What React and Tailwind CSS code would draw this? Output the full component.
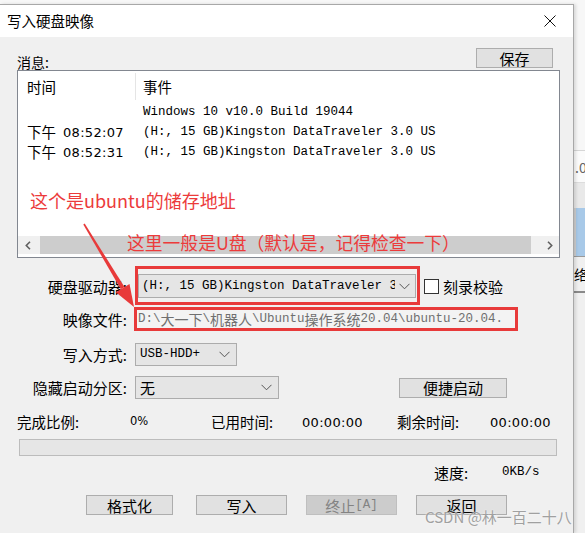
import React from "react";

const CJK = "font-['Noto_Sans_CJK_SC','Noto_Sans_CJK_JP',sans-serif]";
const MONO = "font-['Liberation_Mono','Noto_Sans_CJK_SC',monospace]";
const DIG = "font-['DejaVu_Sans','Noto_Sans_CJK_SC',sans-serif]";

function Chevron() {
  return (
    <svg width="11" height="7" viewBox="0 0 11 7" className="shrink-0">
      <path d="M0.5 0.8 L5.5 5.8 L10.5 0.8" fill="none" stroke="#555" strokeWidth="1" />
    </svg>
  );
}

function Btn({ children, className = "", disabled = false }) {
  return (
    <div
      className={
        "h-[20px] flex items-center justify-center border text-[15px] leading-none " +
        (disabled
          ? "bg-[#cccccc] border-[#bfbfbf] text-[#838383] "
          : "bg-[#e1e1e1] border-[#adadad] text-black ") +
        className
      }
    >
      {children}
    </div>
  );
}

function Label({ children }) {
  return (
    <div className="w-[110px] shrink-0 text-right text-[15px] leading-none text-black whitespace-nowrap">
      {children}
    </div>
  );
}

export default function App() {
  return (
    <div className={"relative w-[585px] h-[533px] overflow-hidden bg-[#f7f7f7] flex " + CJK}>
      {/* dialog */}
      <div className="w-[574px] h-[529px] mt-[4px] flex flex-col border-t border-r border-[#a8a8a8] shadow-[2px_0_3px_rgba(0,0,0,0.12)] z-10 shrink-0">
        {/* title bar */}
        <div className="h-[32px] bg-white flex items-center justify-between pl-[7px] pr-[17px] shrink-0">
          <span className="text-[14.5px] leading-none text-black">写入硬盘映像</span>
          <svg width="12" height="12" viewBox="0 0 12 12">
            <path d="M0.5 0.5 L11.5 11.5 M11.5 0.5 L0.5 11.5" stroke="#111" strokeWidth="1" />
          </svg>
        </div>

        {/* body */}
        <div className="flex-1 bg-[#f0f0f0] pl-[17px] pr-[13px] flex flex-col">
          <div className="mt-[9px] h-[24px] flex justify-between">
            <div className="self-end text-[14px] leading-[16px] text-black">消息:</div>
            <Btn className="w-[77px] mt-[2px] mr-[7px]">保存</Btn>
          </div>

          {/* list */}
          <div className="h-[188px] bg-white border border-[#828790] flex flex-col">
            <div className="h-[31px] flex items-stretch shrink-0">
              <div className="w-[117px] pl-[9px] flex items-center text-[14.5px] text-black">时间</div>
              <div className="flex items-center pl-[7px] border-l border-[#e5e5e5] my-[2px] text-[14.5px] text-black">事件</div>
            </div>
            {[
              ["", "Windows 10 v10.0 Build 19044"],
              ["08:52:07", "(H:, 15 GB)Kingston DataTraveler 3.0 US"],
              ["08:52:31", "(H:, 15 GB)Kingston DataTraveler 3.0 US"],
            ].map(([t, e], i) => (
              <div key={i} className="h-[20px] flex items-center shrink-0">
                <div className="w-[125px] pl-[9px] flex items-center whitespace-nowrap">
                  {t && (
                    <>
                      <span className="text-[14.5px] leading-none text-black">下午</span>
                      <span className={"ml-[7px] text-[13px] tracking-[0.3px] leading-none text-black " + DIG}>{t}</span>
                    </>
                  )}
                </div>
                <div className={"text-[12.5px] leading-none text-black whitespace-nowrap " + MONO}>{e}</div>
              </div>
            ))}
            <div className="flex-1" />
            <div className="h-[18px] mb-[3px] flex items-stretch bg-[#f0f0f0] shrink-0">
              <div className="w-[20px] flex items-center justify-center">
                <svg width="6" height="9" viewBox="0 0 6 9">
                  <path d="M5 0.8 L1.3 4.5 L5 8.2" fill="none" stroke="#606060" strokeWidth="1.6" />
                </svg>
              </div>
              <div className="flex-1 flex items-stretch">
                <div className="ml-[2px] mr-[9px] flex-1 bg-[#cdcdcd]" />
              </div>
              <div className="w-[19px] flex items-center justify-center">
                <svg width="6" height="9" viewBox="0 0 6 9">
                  <path d="M1 0.8 L4.7 4.5 L1 8.2" fill="none" stroke="#606060" strokeWidth="1.6" />
                </svg>
              </div>
            </div>
          </div>

          {/* drive */}
          <div className="mt-[16px] h-[24px] flex items-center">
            <Label>硬盘驱动器:</Label>
            <div className="ml-[11px] w-[278px] h-[24px] bg-[#e5e5e5] border border-[#acacac] flex items-center pl-[3px] pr-[5px]">
              <div className={"flex-1 overflow-hidden whitespace-nowrap text-[12.5px] leading-none text-black " + MONO}>
                (H:, 15 GB)Kingston DataTraveler 3.0 US
              </div>
              <div className="ml-[4px]">
                <Chevron />
              </div>
            </div>
            <div className="ml-[8px] w-[15px] h-[15px] bg-white border border-[#333]" />
            <div className="ml-[4px] text-[15px] leading-none text-black">刻录校验</div>
          </div>

          {/* image file */}
          <div className="mt-[11px] h-[20px] flex items-center">
            <Label>映像文件:</Label>
            <div className="ml-[9px] w-[380px] h-[20px] bg-[#f3f3f3] flex items-center pl-[2px] overflow-hidden whitespace-nowrap text-[#707070] leading-none">
              <span className={"text-[12.5px] " + MONO}>D:\</span>
              <span className="text-[14px]">大一下</span>
              <span className={"text-[12.5px] " + MONO}>\</span>
              <span className="text-[14px]">机器人</span>
              <span className={"text-[12.5px] " + MONO}>\Ubuntu</span>
              <span className="text-[14px]">操作系统</span>
              <span className={"text-[12.5px] " + MONO}>20.04\ubuntu-20.04.</span>
            </div>
          </div>

          {/* write mode */}
          <div className="mt-[14px] h-[23px] flex items-center">
            <Label>写入方式:</Label>
            <div className="ml-[8px] w-[102px] h-[23px] bg-[#e5e5e5] border border-[#acacac] flex items-center justify-between pl-[4px] pr-[6px]">
              <span className={"text-[12.5px] leading-none text-black " + MONO}>USB-HDD+</span>
              <Chevron />
            </div>
          </div>

          {/* hidden boot partition */}
          <div className="mt-[10px] h-[23px] flex items-center">
            <Label>隐藏启动分区:</Label>
            <div className="ml-[8px] w-[144px] h-[23px] bg-[#e5e5e5] border border-[#acacac] flex items-center justify-between pl-[4px] pr-[6px]">
              <span className="text-[15px] leading-none text-black">无</span>
              <Chevron />
            </div>
            <Btn className="ml-[120px] w-[108px]">便捷启动</Btn>
          </div>

          {/* progress labels */}
          <div className="mt-[15px] h-[16px] flex items-center whitespace-nowrap text-black leading-none">
            <div className="w-[113px] text-[14.5px]">完成比例:</div>
            <div className={"w-[81px] text-[11.5px] " + DIG}>0%</div>
            <div className="w-[91px] text-[14.5px]">已用时间:</div>
            <div className={"w-[95px] text-[13px] tracking-[0.3px] " + DIG}>00:00:00</div>
            <div className="w-[93px] text-[14.5px]">剩余时间:</div>
            <div className={"text-[13px] tracking-[0.3px] " + DIG}>00:00:00</div>
          </div>

          <div className="mt-[9px] ml-[2px] w-[538px] h-[17px] bg-[#e6e6e6] border border-[#bcbcbc]" />

          {/* speed */}
          <div className="mt-[8px] h-[16px] flex items-center whitespace-nowrap text-black leading-none">
            <div className="ml-[417px] w-[68px] text-[15px]">速度:</div>
            <div className={"text-[12.5px] " + MONO}>0KB/s</div>
          </div>

          {/* buttons */}
          <div className="mt-[15px] h-[20px] flex">
            <Btn className="ml-[69px] w-[87px]">格式化</Btn>
            <Btn className="ml-[23px] w-[91px]">写入</Btn>
            <Btn disabled className="ml-[19px] w-[91px]">
              终止<span className={"text-[12.5px] " + MONO}>[A]</span>
            </Btn>
            <Btn className="ml-[19px] w-[91px]">返回</Btn>
          </div>
        </div>
      </div>

      {/* background window strip on the right */}
      <div className="flex-1 flex flex-col">
        <div className="h-[150px] bg-[#f7f7f7]" />
        <div className="h-[32px] border-t border-[#d6d6d6] bg-[#fbfbfb] flex items-center pl-[1px] overflow-hidden">
          <span className="text-[14px] leading-none text-[#666] whitespace-nowrap">.0</span>
        </div>
        <div className="h-[26px] bg-[#e9e9e9] border-t border-[#dddddd]" />
        <div className="h-[48px] flex">
          <div className="w-[2px] bg-[#d0d0d0]" />
          <div className="flex-1 bg-[#a8c9e8]" />
          <div className="w-[2px] bg-[#dfeaf5]" />
        </div>
        <div className="h-[1px] bg-[#9a9a9a]" />
        <div className="h-[34px] bg-[#f0f0f0] flex items-center overflow-hidden">
          <span className="text-[14px] leading-none text-black whitespace-nowrap">络</span>
        </div>
        <div className="h-[2px] bg-[#8a8a8a]" />
        <div className="flex-1 bg-[#f0f0f0]" />
      </div>

      {/* annotations */}
      <div className="absolute left-[30px] top-[188px] text-[18px] leading-[24px] text-[#ec3b3b] whitespace-nowrap z-20">
        这个是ubuntu的储存地址
      </div>
      <div className="absolute left-[127px] top-[230px] text-[17.8px] leading-[24px] text-[#ec3b3b] whitespace-nowrap z-20">
        这里一般是U盘（默认是，记得检查一下）
      </div>
      <div className="absolute left-[135px] top-[266px] w-[285px] h-[39px] border-[3px] border-[#e83a3a] z-20" />
      <div className="absolute left-[134px] top-[307px] w-[384px] h-[24px] border-[3px] border-[#e83a3a] z-20" />
      <svg className="absolute left-0 top-0 z-20 pointer-events-none" width="585" height="533" viewBox="0 0 585 533">
        <polygon points="83.3,224.4 84.7,223.6 124.5,287.0 120.8,289.3" fill="#e83a3a" />
        <polygon points="134,307 115.8,292.3 129.5,284.0" fill="#e83a3a" />
      </svg>
      <div className="absolute left-[425px] top-[506px] text-[15px] leading-[22px] text-[#a0a0a0] whitespace-nowrap z-20 [text-shadow:0_0_2px_rgba(255,255,255,0.9)]">
        CSDN @林一百二十八
      </div>
    </div>
  );
}
